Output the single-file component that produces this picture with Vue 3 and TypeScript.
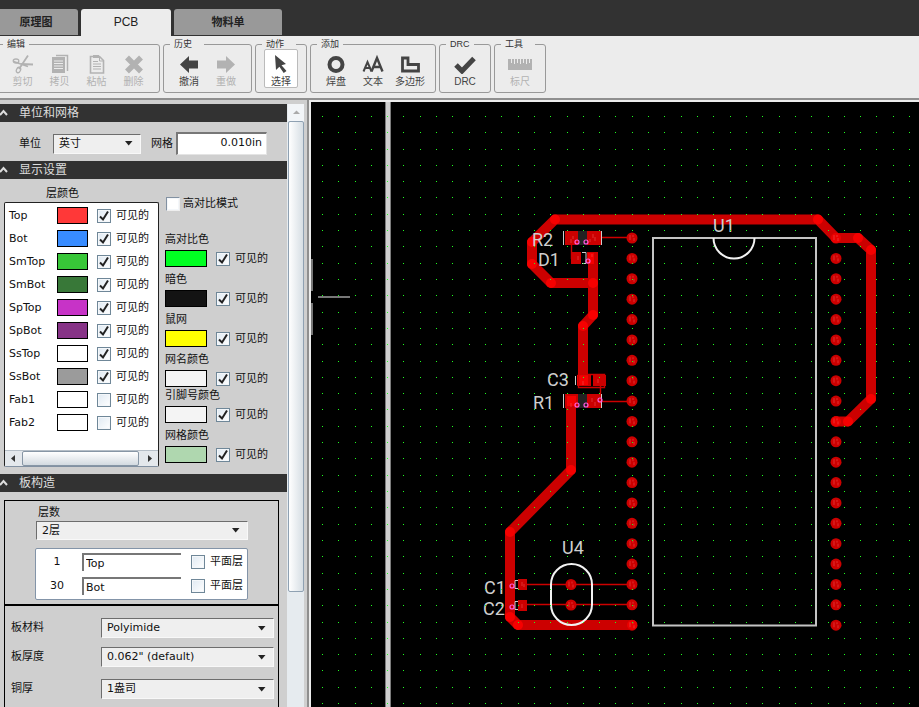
<script setup lang="ts">
import { reactive, ref } from 'vue'

interface Layer { name: string; color: string; visible: boolean }
interface Display { label: string; color: string; visible: boolean; tight?: boolean }
interface Point { x: number; y: number }

const layers = reactive<Layer[]>([
  { name: 'Top', color: '#ff3838', visible: true },
  { name: 'Bot', color: '#388cff', visible: true },
  { name: 'SmTop', color: '#38c738', visible: true },
  { name: 'SmBot', color: '#387838', visible: true },
  { name: 'SpTop', color: '#c733c7', visible: true },
  { name: 'SpBot', color: '#873387', visible: true },
  { name: 'SsTop', color: '#ffffff', visible: true },
  { name: 'SsBot', color: '#9b9b9b', visible: true },
  { name: 'Fab1', color: '#ffffff', visible: false },
  { name: 'Fab2', color: '#ffffff', visible: false },
])

const displays = reactive<Display[]>([
  { label: '高对比色', color: '#00ff22', visible: true },
  { label: '暗色', color: '#131313', visible: true },
  { label: '鼠网', color: '#ffff00', visible: true },
  { label: '网名颜色', color: '#f4f4f4', visible: true },
  { label: '引脚号颜色', color: '#f4f4f4', visible: true, tight: true },
  { label: '网格颜色', color: '#afd7af', visible: true },
])

const stack = reactive([
  { num: 1, name: 'Top', plane: false },
  { num: 30, name: 'Bot', plane: false },
])

const specs = [
  { id: 'material', label: '板材料', value: 'Polyimide' },
  { id: 'thickness', label: '板厚度', value: '0.062" (default)' },
  { id: 'copper', label: '铜厚', value: '1盎司' },
]

const highContrast = ref(false)
const grid = ref('0.010in')

// Grid dots are snapped to whole pixels so that each stays one crisp pixel.
const PITCH = 16.31
const dotPath = (() => {
  let d = ''
  for (let r = 0; r < 90; r++) {
    for (let c = 0; c < 120; c++) {
      d += `M${Math.floor(322.4 + c * PITCH)} ${Math.floor(116.4 + r * PITCH)}h1v1h-1z`
    }
  }
  return d
})()

const pins: Point[] = []
for (const x of [632, 836]) {
  for (let i = 0; i < 20; i++) pins.push({ x, y: 238 + i * 20.38 })
}
pins.push({ x: 571, y: 584.5 }, { x: 571, y: 605 })

const traces: number[][][] = [
  [[836, 238], [818, 219.5], [555, 219.5], [532, 242], [532, 264], [551, 283], [593, 283]],
  [[593, 258], [593, 315], [583, 326], [583, 380]],
  [[571, 401], [571, 470], [510, 532], [510, 617], [518, 625], [632, 625]],
  [[836, 238], [858, 238], [871, 250], [871, 399], [848, 421.5], [836, 421.5]],
]
const joints = traces.flat()
const toPoints = (t: number[][]) => t.map((p) => p.join(',')).join(' ')
const vias = [[577, 242], [586, 242], [588, 261], [577, 405], [586, 405], [600, 400], [512, 586], [512, 607]]
</script>

<template>
  <div class="app">
    <nav class="tabs">
      <button class="tab schematic">原理图</button>
      <button class="tab pcb active">PCB</button>
      <button class="tab bom">物料单</button>
    </nav>

    <div class="toolbar">
      <fieldset class="group edit">
        <legend>编辑</legend>
        <div class="tools">
          <button class="tool" disabled>
            <svg width="22" height="20" viewBox="0 0 22 20" fill="none" stroke="currentColor">
              <path d="M1.500 7.500L16 12.500M7 15L16 1.500" stroke-width="1.800" />
              <path d="M9 10L21 10.500" stroke-width="1.800" />
              <ellipse cx="4" cy="7" rx="2.800" ry="2" stroke-width="1.300" />
              <ellipse cx="6.500" cy="16" rx="2" ry="2.800" transform="rotate(25 6.500 16)" stroke-width="1.300" />
            </svg>
            剪切
          </button>
          <button class="tool" disabled>
            <svg width="20" height="20" viewBox="0 0 20 20" fill="none" stroke="currentColor">
              <path d="M6 1.500H17.500V17" stroke-width="1.500" />
              <path d="M2 3h13v16H2z" fill="currentColor" stroke="none" />
              <path d="M4 7h9M4 9.500h9M4 12h9M4 14.500h9" stroke="#ececec" />
            </svg>
            拷贝
          </button>
          <button class="tool" disabled>
            <svg width="20" height="20" viewBox="0 0 20 20" fill="none" stroke="currentColor">
              <path d="M3.500 2.500h9l4 4v12.500h-13z" stroke-width="1.600" />
              <path d="M6 1h6v3H6z" fill="currentColor" stroke="none" />
              <path d="M12.500 3v4h4M6 7.500h5M6 10h8M6 12.500h8M6 15h8" />
            </svg>
            粘帖
          </button>
          <button class="tool" disabled>
            <svg width="20" height="20" viewBox="0 0 20 20" fill="none" stroke="currentColor">
              <path d="M3 3.500L17 17.500M17 3.500L3 17.500" stroke-width="5.500" />
            </svg>
            删除
          </button>
        </div>
      </fieldset>

      <fieldset class="group history">
        <legend class="wide">历史</legend>
        <div class="tools">
          <button class="tool">
            <svg width="20" height="20" viewBox="0 0 20 20"><path d="M1 10.500L10 2v4.500h9v8h-9V19z" fill="currentColor" /></svg>
            撤消
          </button>
          <button class="tool" disabled>
            <svg width="20" height="20" viewBox="0 0 20 20"><path d="M19 10.500L10 2v4.500H1v8h9V19z" fill="currentColor" /></svg>
            重做
          </button>
        </div>
      </fieldset>

      <fieldset class="group action">
        <legend class="wide">动作</legend>
        <div class="tools">
          <button class="tool selected">
            <svg width="20" height="20" viewBox="0 0 20 20"><path d="M4 1l11 9-4.500 1.200L15.500 17l-2.800 2-4.300-6.200L5 16z" fill="currentColor" /></svg>
            选择
          </button>
        </div>
      </fieldset>

      <fieldset class="group add">
        <legend>添加</legend>
        <div class="tools">
          <button class="tool">
            <svg width="20" height="20" viewBox="0 0 20 20"><circle cx="10" cy="10.500" r="6.500" fill="none" stroke="currentColor" stroke-width="4" /></svg>
            焊盘
          </button>
          <button class="tool">
            <svg width="22" height="20" viewBox="0 0 22 20" fill="none" stroke="currentColor">
              <path d="M1.500 17.500L5.500 8l4 9.500M3 14h5" stroke-width="2" />
              <path d="M9.500 17.500L15 4l5.500 13.500M11.500 13h7" stroke-width="2.400" />
            </svg>
            文本
          </button>
          <button class="tool">
            <svg width="22" height="20" viewBox="0 0 22 20"><path d="M3.500 4H9v6.500h10.500V17h-16z" fill="none" stroke="currentColor" stroke-width="2.800" /></svg>
            多边形
          </button>
        </div>
      </fieldset>

      <fieldset class="group drc">
        <legend>DRC</legend>
        <div class="tools">
          <button class="tool">
            <svg width="22" height="20" viewBox="0 0 22 20"><path d="M2 11l6 6L20 4.500" fill="none" stroke="currentColor" stroke-width="5" /></svg>
            DRC
          </button>
        </div>
      </fieldset>

      <fieldset class="group ruler">
        <legend class="wide">工具</legend>
        <div class="tools">
          <button class="tool" disabled>
            <svg width="24" height="20" viewBox="0 0 24 20">
              <path d="M0 5h24v11H0z" fill="currentColor" />
              <path d="M3.500 5v4M6.500 5v5M9.500 5v4M12.500 5v5M15.500 5v4M18.500 5v5M21.500 5v4" stroke="#ececec" />
            </svg>
            标尺
          </button>
        </div>
      </fieldset>
    </div>

    <main class="work">
      <aside class="side">
        <div class="panel">
          <h2 class="bar">
            <svg width="8" height="8" viewBox="0 0 8 8"><path d="M0 6l3.500-4L7 6" /></svg>单位和网格
          </h2>
          <section class="units">
            <label for="unit">单位</label>
            <span class="select unit">
              <select id="unit"><option>英寸</option></select>
              <svg width="8" height="5" viewBox="0 0 8 5"><path d="M0 0h7.500L3.700 4.500z" /></svg>
            </span>
            <label for="grid" class="grid-label">网格</label>
            <input id="grid" v-model="grid" class="grid-input" type="text" />
          </section>

          <h2 class="bar">
            <svg width="8" height="8" viewBox="0 0 8 8"><path d="M0 6l3.500-4L7 6" /></svg>显示设置
          </h2>
          <section class="display">
            <div class="layers">
              <h3>层颜色</h3>
              <div class="layer-box">
                <ul>
                  <li v-for="l in layers" :key="l.name">
                    <span class="layer-name">{{ l.name }}</span>
                    <button class="swatch" :aria-label="l.name" :style="{ background: l.color }"></button>
                    <label class="check">
                      <span class="tick">
                        <input v-model="l.visible" type="checkbox" />
                        <svg v-if="l.visible" width="14" height="14" viewBox="0 0 14 14"><path d="M3 7.500l3 3L11 2.500" /></svg>
                      </span>可见的
                    </label>
                  </li>
                </ul>
                <div class="hscroll">
                  <svg width="17" height="15" viewBox="0 0 17 15"><path d="M10 4v7L6 7.500z" /></svg>
                  <span class="hthumb"></span>
                  <svg width="19" height="15" viewBox="0 0 19 15"><path d="M9 4v7l4-3.500z" /></svg>
                </div>
              </div>
            </div>
            <div class="colors">
              <label class="check contrast">
                <span class="tick">
                  <input v-model="highContrast" type="checkbox" />
                  <svg v-if="highContrast" width="14" height="14" viewBox="0 0 14 14"><path d="M3 7.500l3 3L11 2.500" /></svg>
                </span>高对比模式
              </label>
              <div v-for="d in displays" :key="d.label" class="color-item" :class="{ tight: d.tight }">
                <span class="color-name">{{ d.label }}</span>
                <div class="color-row">
                  <button class="swatch large" :aria-label="d.label" :style="{ background: d.color }"></button>
                  <label class="check">
                    <span class="tick">
                      <input v-model="d.visible" type="checkbox" />
                      <svg v-if="d.visible" width="14" height="14" viewBox="0 0 14 14"><path d="M3 7.500l3 3L11 2.500" /></svg>
                    </span>可见的
                  </label>
                </div>
              </div>
            </div>
          </section>

          <h2 class="bar">
            <svg width="8" height="8" viewBox="0 0 8 8"><path d="M0 6l3.500-4L7 6" /></svg>板构造
          </h2>
          <section class="board">
            <div class="stack">
              <label for="count">层数</label>
              <span class="select count">
                <select id="count"><option>2层</option></select>
                <svg width="8" height="5" viewBox="0 0 8 5"><path d="M0 0h7.500L3.700 4.500z" /></svg>
              </span>
              <div class="stack-list">
                <div v-for="s in stack" :key="s.num" class="stack-row">
                  <span class="num">{{ s.num }}</span>
                  <input v-model="s.name" type="text" :aria-label="`${s.num}`" />
                  <label class="check">
                    <span class="tick"><input v-model="s.plane" type="checkbox" />
                      <svg v-if="s.plane" width="14" height="14" viewBox="0 0 14 14"><path d="M3 7.500l3 3L11 2.500" /></svg>
                    </span>平面层
                  </label>
                </div>
              </div>
            </div>
            <div class="specs">
              <div v-for="s in specs" :key="s.id" class="spec" :class="s.id">
                <label :for="s.id">{{ s.label }}</label>
                <span class="select">
                  <select :id="s.id"><option>{{ s.value }}</option></select>
                  <svg width="8" height="5" viewBox="0 0 8 5"><path d="M0 0h7.500L3.700 4.500z" /></svg>
                </span>
              </div>
            </div>
          </section>
        </div>
        <div class="vscroll">
          <svg width="16" height="17" viewBox="0 0 16 17"><path d="M5 10h7L8.500 6.500z" /></svg>
          <span class="vthumb"></span>
        </div>
      </aside>

      <div class="canvas">
        <svg class="board-view" width="100%" height="100%">
          <g transform="translate(-311 -102)">
            <path d="M385 102h6v2000h-6z" fill="#7c7c7c" />
            <path d="M386 102h4v2000h-4z" fill="#cfcfcf" />
            <path d="M311 259h2v32h-2zM311 303h2v32h-2zM318 296h32v2h-32z" fill="#777" />

            <polyline v-for="(t, i) in traces" :key="i" class="trace" :points="toPoints(t)" />
            <g fill="#f60000">
              <circle v-for="(j, i) in joints" :key="i" :cx="j[0]" :cy="j[1]" r="5" />
            </g>

            <g fill="#cc0000">
              <path d="M565 231h13v14h-13zM587 231h14v14h-14zM571 252h10v12h-10zM587 252h11v12h-11z" />
              <path d="M565 394h13v14h-13zM587 394h14v14h-14zM577 375h14v11h-14zM593 375h13v11h-13z" />
              <path d="M518 579h9v11h-9zM518 600h9v11h-9z" />
            </g>
            <path d="M588 253h6v11h-6zM577 375h11v10h-11zM567 396h9v10h-9z" fill="#f60000" />
            <path d="M578 231h9v14h-9zM578 394h9v14h-9z" fill="#222" />
            <path class="thin" d="M601 237.500H632M571.500 237V259M601 401.500H632M600.500 385v16M527 584.500H632M527 604.500H632M578.500 374.500h26v13h-26z" />
            <g fill="#cc0000">
              <circle v-for="(p, i) in pins" :key="i" :cx="p.x" :cy="p.y" r="5.500" />
            </g>
            <g fill="#f60000" fill-opacity="0.700">
              <circle cx="836" cy="238" r="5" /><circle cx="836" cy="421.500" r="5" /><circle cx="632" cy="625" r="5" />
            </g>
            <path v-for="(p, i) in pins" :key="`m${i}`" class="mark" :d="`M${p.x - 2} ${p.y - 3}v5M${p.x + 1} ${p.y - 3}v2M${p.x + 2} ${p.y}v3`" />
            <path class="mark" d="M571 239v4M573 236v3M593 234v4M595 237v4M590 239v3M578 256v4M592 254v3M571 403v4M592 398v4M595 402v4M583 381v4M598 379v4M522 582v4M524 584v3M522 604v4" />

            <g class="silk">
              <rect x="653" y="238" width="163" height="387.500" />
              <path class="bright" d="M713.500 238a20.500 20.500 0 0 0 41 0" />
              <rect class="bright" x="551" y="564" width="41" height="61" rx="20.500" />
            </g>
            <path class="edge" d="M563.500 231v14M601.500 231v14M563.500 394v14M601.500 394v14M575.500 376v9M582 252.500h4v11h-4M518 580.500h-3v8h3M518 601.500h-3v8h3" />
            <circle v-for="(v, i) in vias" :key="`v${i}`" class="via" :cx="v[0]" :cy="v[1]" r="2" />
            <g class="names">
              <text x="532" y="246">R2</text>
              <text x="538" y="266">D1</text>
              <text x="547" y="386">C3</text>
              <text x="533" y="409">R1</text>
              <text x="713" y="232">U1</text>
              <text x="562" y="554">U4</text>
              <text x="484" y="594">C1</text>
              <text x="483" y="615">C2</text>
            </g>
            <path :d="dotPath" fill="#1fff1f" shape-rendering="crispEdges" />
          </g>
        </svg>
      </div>
    </main>
  </div>
</template>

<style>
body { margin: 0; overflow: hidden; }
</style>

<style scoped>
.app {
  display: flex;
  flex-direction: column;
  height: 100vh;
  overflow: hidden;
  background: #ececec;
  color: #111;
  font: 11px/16px "DejaVu Sans", "Noto Sans CJK SC", sans-serif;
}
.app *, .app *::before { box-sizing: border-box; }
button, input, select { font: inherit; color: inherit; margin: 0; padding: 0; border: 0; border-radius: 0; }
h2, h3, ul { margin: 0; padding: 0; font-weight: normal; font-size: inherit; }

.tabs { display: flex; gap: 3px; height: 36px; padding-top: 9px; flex: none; background: #323232; }
.tab {
  width: 108px;
  padding-top: 1px;
  background: #999;
  border-radius: 3px 3px 0 0;
  border-bottom: 1px solid #323232;
  color: #222;
  font: bold 11px/25px "Liberation Sans", "Noto Sans CJK SC", sans-serif;
}
.tab.schematic { width: 78px; border-radius: 0 3px 0 0; padding-right: 6px; }
.tab.pcb { width: 90px; }
.tab.active { background: #ececec; border-color: #ececec; font-weight: normal; font-size: 12px; }

.toolbar {
  display: flex;
  gap: 3px;
  height: 64px;
  flex: none;
  padding-top: 2px;
  border-bottom: 2px solid #8f8f8f;
  font-family: "Liberation Sans", "Noto Sans CJK SC", sans-serif;
}
.group { height: 55px; min-width: 0; margin: 0; padding: 0; border: 1px solid #999; border-radius: 3px; }
.group legend { margin-left: 6px; padding: 0 4px; font-size: 9px; line-height: 13px; color: #333; }
.group legend.wide { padding-right: 12px; }
.edit { width: 164px; margin-left: -4px; padding-left: 7px; }
.edit legend { margin-left: -1px; }
.history { width: 89px; }
.action { width: 52px; }
.add { width: 126px; }
.drc, .ruler { width: 52px; }
.tools { display: flex; justify-content: center; margin-top: -2px; }
.edit .tools { justify-content: flex-start; }
.tool {
  display: flex;
  flex-direction: column;
  align-items: center;
  width: 37px;
  height: 39px;
  padding-top: 5px;
  background: none;
  color: #444;
  font-size: 10px;
  line-height: 15px;
  white-space: nowrap;
}
.tool:disabled { color: #b2b2b2; }
.tool svg { flex: none; }
.tool.selected { width: 34px; background: #fff; border: 1px solid #bbb; border-radius: 2px; padding-top: 4px; }

.work { display: flex; flex: 1; min-height: 0; background: #cfcfcf; }
.side { display: flex; width: 309px; flex: none; padding: 4px 3px 0 0; border-right: 2px solid #8f8f8f; overflow: hidden; }
.panel { width: 287px; overflow: hidden; }
.bar {
  display: flex;
  align-items: center;
  gap: 11px;
  height: 18px;
  background: #323232;
  color: #ddd;
  font-size: 12px;
  line-height: 18px;
}
.bar svg { fill: none; stroke: #ddd; stroke-width: 2; }

.select { display: grid; align-items: center; height: 20px; }
.select > * { grid-area: 1 / 1; }
.select select {
  appearance: none;
  width: 100%;
  height: 100%;
  padding-left: 5px;
  background: #efefef;
  border: 1px solid #f8f8f8;
  border-top-color: #6d6d6d;
  border-left-color: #6d6d6d;
}
.select svg { justify-self: end; margin-right: 8px; fill: #222; pointer-events: none; }

.units { display: flex; align-items: center; height: 39px; padding: 4px 0 0 19px; }
.unit { width: 88px; margin: 0 10px 0 12px; }
.grid-label { margin-right: 3px; }
.grid-input {
  width: 91px;
  height: 23px;
  padding: 0 4px 4px;
  text-align: right;
  background: #fff;
  border: 1px solid #e4e4e4;
  border-top: 2px solid #777;
  border-left: 2px solid #777;
}

.display { display: flex; gap: 6px; height: 295px; padding-left: 4px; }
.layers { width: 155px; }
.layers h3 { height: 23px; padding: 7px 0 0 42px; line-height: 16px; }
.layer-box { height: 265px; display: flex; flex-direction: column; background: #fff; border: 1px solid #222; border-bottom-color: #8291a2; border-radius: 2px; }
.layer-box ul { flex: 1; list-style: none; padding-top: 1px; }
.layer-box li { display: flex; align-items: center; height: 23px; padding-left: 4px; }
.layer-name { width: 48px; }
.swatch { width: 31px; height: 17px; border: 1px solid #000; flex: none; }
.swatch.large { width: 42px; margin-right: -4px; }
.check { display: flex; align-items: center; gap: 5px; margin-left: 9px; line-height: 18px; white-space: nowrap; }
.swatch.large + .check { margin-left: 13px; }
.tick { display: grid; width: 14px; height: 14px; }
.tick > * { grid-area: 1 / 1; }
.tick input {
  appearance: none;
  width: 14px;
  height: 14px;
  background: linear-gradient(135deg, #dfe9f2, #fff);
  border: 1px solid #6f8798;
  box-shadow: inset 0 0 0 1px #f4f7fa;
}
.tick svg { fill: none; stroke: #222; stroke-width: 2; pointer-events: none; }
.hscroll { display: flex; height: 16px; background: #e4e8ec; border-top: 1px solid #b5bec7; }
.hscroll svg, .vscroll svg { flex: none; fill: #333; }
.hthumb { flex: 1; background: linear-gradient(#fff, #d3dae0); border: 1px solid #8796a5; border-radius: 2px; }

.colors { padding-top: 17px; }
.check.contrast { height: 16px; margin: 0 0 19px 1px; gap: 3px; }
.contrast .tick input { background: #fff; border-color: #8291a2 #eee #eee #8291a2; }
.color-item { height: 40px; padding-top: 4px; }
.color-item.tight { height: 36px; padding-top: 0; }
.contrast + .color-item { height: 36px; padding-top: 0; }
.color-name { display: block; height: 19px; line-height: 18px; white-space: nowrap; }
.color-row { display: flex; align-items: center; height: 17px; }

.board { padding: 8px 8px 0 4px; }
.stack { height: 106px; padding: 3px 30px 0; border: 1px solid #000; border-bottom-width: 2px; }
.stack > label { display: block; height: 17px; padding-left: 3px; line-height: 18px; }
.count { height: 19px; margin-left: 1px; }
.stack-list { margin-top: 8px; padding-top: 1px; height: 52px; background: #fff; border: 1px solid #8394a8; border-radius: 2px; }
.stack-row { display: flex; align-items: center; height: 24px; }
.num { width: 42px; text-align: center; }
.stack-row input[type="text"] {
  width: 99px;
  height: 18px;
  margin-left: 4px;
  padding: 1px 0 0 2px;
  background: #fff;
  border-top: 2px solid #777;
  border-left: 2px solid #777;
}
.stack-row .check { margin-left: 10px; }
.specs { border: 1px solid #000; border-top: 0; border-bottom: 0; padding: 12px 4px 20px 6px; }
.spec { display: flex; align-items: center; height: 20px; margin-bottom: 9px; }
.spec label { width: 90px; }
.spec .select { flex: 1; }
.spec.copper { margin-top: 12px; }

.vscroll { display: flex; flex-direction: column; width: 17px; padding-left: 1px; background: #e6ebef; flex: none; }
.vscroll svg { fill: #aaa; background: #f2f5f8; }
.vthumb { height: 471px; background: linear-gradient(90deg, #fff, #d6dee4); border: 1px solid #8fa1b2; border-radius: 2px; }

.canvas { flex: 1; min-width: 0; padding: 2px 0 0 2px; background: #ececec; overflow: hidden; }
.board-view { display: block; background: #000; }
.trace { fill: none; stroke: #cc0000; stroke-width: 10; stroke-linecap: round; stroke-linejoin: round; }
.thin { fill: none; stroke: #cc0000; stroke-width: 1.4; }
.mark { stroke: #f06060; stroke-width: 1; opacity: 0.5; }
.silk { fill: none; stroke: #c4c4c4; stroke-width: 2; }
.silk .bright { stroke: #f2f2f2; }
.edge { fill: none; stroke: #ccc; stroke-width: 1; }
.via { fill: none; stroke: #ff5ce0; stroke-width: 1.2; }
.names { fill: #cfcfcf; font: 400 18px/18px Roboto, sans-serif; }
</style>
